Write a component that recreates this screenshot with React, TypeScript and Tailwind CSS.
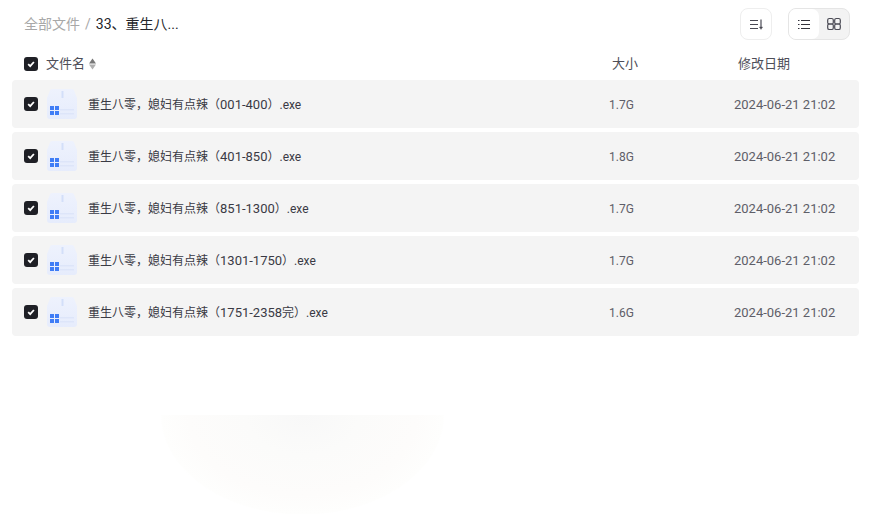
const files = [
  { range: "001-400", size: "1.7G" },
  { range: "401-850", size: "1.8G" },
  { range: "851-1300", size: "1.7G" },
  { range: "1301-1750", size: "1.7G" },
  { range: "1751-2358", suffix: "完", size: "1.6G" },
];

const latin = { fontFamily: 'Roboto, sans-serif' };

function Check() {
  return (
    <span className="flex h-[14px] w-[14px] shrink-0 items-center justify-center rounded-[3px] bg-[#1f2026]">
      <svg width="10" height="10" viewBox="0 0 10 10" fill="none">
        <path d="M2.2 5.2 L4.2 7.2 L7.9 3" stroke="#fff" strokeWidth="1.8" />
      </svg>
    </span>
  );
}

function FileIcon() {
  return (
    <svg width="30" height="30" viewBox="0 0 30 30" className="block shrink-0">
      <defs>
        <linearGradient id="box" x1="0" y1="0" x2="0" y2="1">
          <stop offset="0" stopColor="#eef2fd" />
          <stop offset="1" stopColor="#e6ecfc" />
        </linearGradient>
      </defs>
      <path d="M3 1.5 Q3.3 0 5 0 H25 Q26.7 0 27 1.5 L30 9 V27 Q30 30 27 30 H3 Q0 30 0 27 V9 Z" fill="url(#box)" />
      <rect x="14.5" y="2" width="2" height="7" fill="#d3dff9" />
      <rect x="13" y="20" width="14" height="1.5" fill="#dde5f9" />
      <rect x="13" y="24" width="14" height="1.5" fill="#dde5f9" />
      <rect x="3" y="17" width="4" height="4" fill="#3f7df6" />
      <rect x="8" y="17" width="4" height="4" fill="#3f7df6" />
      <rect x="3" y="22" width="4" height="4" fill="#3f7df6" />
      <rect x="8" y="22" width="4" height="4" fill="#3f7df6" />
    </svg>
  );
}

export default function App() {
  return (
    <div
      className="relative h-[514px] w-[874px] overflow-hidden bg-white"
      style={{ fontFamily: 'Roboto, "Noto Sans CJK SC", sans-serif' }}
    >
      <div className="flex h-[48px] items-center pl-[24px] pr-[24px]">
        <span className="text-[14px] text-[#a8a8a8]">全部文件</span>
        <span className="mx-[5px] text-[14px] text-[#a8a8a8]">/</span>
        <span className="text-[14px] text-[#25262b]">33、重生八...</span>
        <button className="ml-auto flex h-[32px] w-[32px] items-center justify-center rounded-[8px] border border-[#eeeeee] bg-white">
          <svg width="16" height="16" viewBox="0 0 16 16" fill="none" stroke="#4a4a54" strokeWidth="1">
            <path d="M2 4.5H10M2 8.5H10M2 12.5H10" />
            <path d="M13 3.5V12" strokeWidth="1.2" />
            <path d="M11.4 11 L13 13.4 L14.6 11Z" fill="#4a4a54" strokeWidth="0.4" />
          </svg>
        </button>
        <div className="ml-[16px] flex h-[32px] w-[62px] rounded-[8px] border border-[#e5e5e5] bg-[#f3f3f3]">
          <span className="flex h-full w-[30px] items-center justify-center rounded-[7px] bg-white">
            <svg width="14" height="14" viewBox="0 0 14 14" fill="none" stroke="#33333c" strokeWidth="1">
              <path d="M4 3.5H13M4 7.5H13M4 11.5H13" />
              <path d="M1 3.5H2.5M1 7.5H2.5M1 11.5H2.5" />
            </svg>
          </span>
          <span className="flex h-full flex-1 items-center justify-center">
            <svg width="14" height="14" viewBox="0 0 14 14" fill="none" stroke="#4a4a54" strokeWidth="1.2">
              <rect x="0.7" y="1.5" width="5.6" height="5.5" rx="1.6" />
              <rect x="7.7" y="1.5" width="5.6" height="5.5" rx="1.6" />
              <rect x="0.7" y="7" width="5.6" height="5.5" rx="1.6" />
              <rect x="7.7" y="7" width="5.6" height="5.5" rx="1.6" />
            </svg>
          </span>
        </div>
      </div>

      <div className="flex h-[32px] items-center pl-[24px] text-[13px] text-[#4e4e58]">
        <Check />
        <span className="ml-[8px]">文件名</span>
        <svg width="7" height="12" viewBox="0 0 7 12" className="ml-[4px]">
          <path d="M3.5 0.5 L7 5.4 H0Z" fill="#777" />
          <path d="M3.5 11.5 L7 6.6 H0Z" fill="#b0b0b0" />
        </svg>
        <span className="ml-auto w-[126px]">大小</span>
        <span className="w-[136px]">修改日期</span>
      </div>

      <div className="flex flex-col gap-[4px] pl-[12px] pr-[15px]">
        {files.map((f) => (
          <div key={f.range} className="flex h-[48px] items-center rounded-[4px] bg-[#f4f4f4] pl-[12px]">
            <Check />
            <span className="ml-[9px] mr-[11px]"><FileIcon /></span>
            <span className="flex-1 pt-[1px] text-[12px] text-[#3a3a44]">
              重生八零，媳妇有点辣（<span className="text-[13px]" style={latin}>{f.range}</span>{f.suffix}）<span style={latin}>.exe</span>
            </span>
            <span className="w-[125px] pt-[1px] text-[12px] text-[#5e5e68]">{f.size}</span>
            <span className="w-[125px] pt-[1px] text-[13px] text-[#5e5e68]">2024-06-21 21:02</span>
          </div>
        ))}
      </div>

      <div
        className="absolute left-[160px] top-[415px] h-[99px] w-[285px]"
        style={{ background: "radial-gradient(ellipse 142px 100px at 50% 0, #f8f8f8 0%, #fbfbfa 40%, #fdfcfb 80%, #fefefd 99%, #ffffff 100%)" }}
      />
    </div>
  );
}
